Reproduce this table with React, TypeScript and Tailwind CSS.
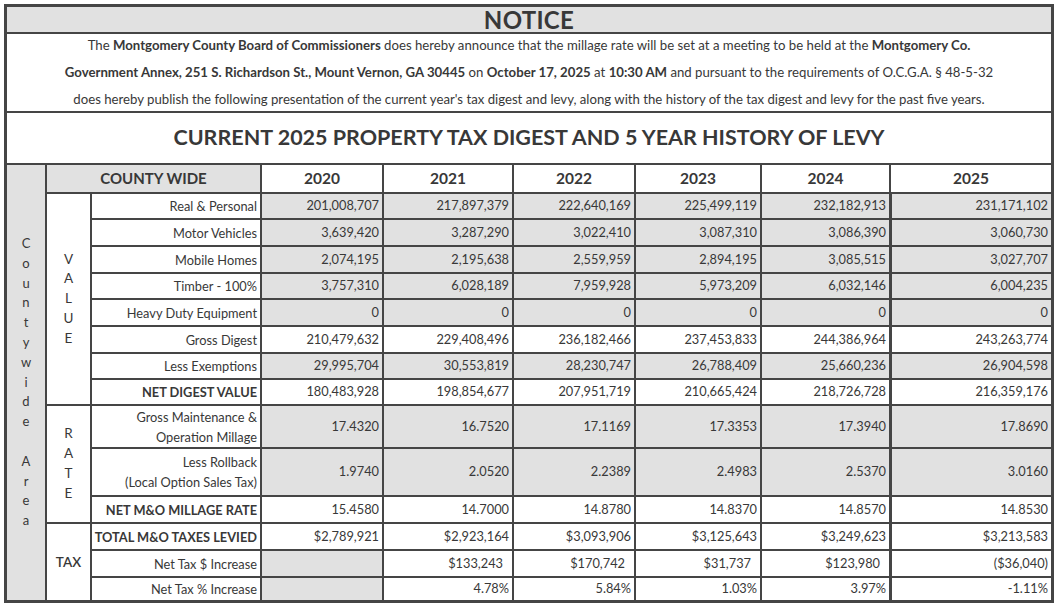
import React from "react"

type Row = {
  label: React.ReactNode
  values: string[]
  shade: boolean
  bold?: boolean
  first?: boolean // 2020 cell shaded even when the row isn't
  padRight?: boolean
}

const years = ["2020", "2021", "2022", "2023", "2024", "2025"]

const rows: Row[] = [
  { label: "Real & Personal", values: ["201,008,707", "217,897,379", "222,640,169", "225,499,119", "232,182,913", "231,171,102"], shade: true },
  { label: "Motor Vehicles", values: ["3,639,420", "3,287,290", "3,022,410", "3,087,310", "3,086,390", "3,060,730"], shade: true },
  { label: "Mobile Homes", values: ["2,074,195", "2,195,638", "2,559,959", "2,894,195", "3,085,515", "3,027,707"], shade: true },
  { label: "Timber - 100%", values: ["3,757,310", "6,028,189", "7,959,928", "5,973,209", "6,032,146", "6,004,235"], shade: true },
  { label: "Heavy Duty Equipment", values: ["0", "0", "0", "0", "0", "0"], shade: true },
  { label: "Gross Digest", values: ["210,479,632", "229,408,496", "236,182,466", "237,453,833", "244,386,964", "243,263,774"], shade: false },
  { label: "Less Exemptions", values: ["29,995,704", "30,553,819", "28,230,747", "26,788,409", "25,660,236", "26,904,598"], shade: true },
  { label: "NET DIGEST VALUE", values: ["180,483,928", "198,854,677", "207,951,719", "210,665,424", "218,726,728", "216,359,176"], shade: false, bold: true },
  {
    label: (
      <>
        Gross Maintenance &amp;
        <br />
        Operation Millage
      </>
    ),
    values: ["17.4320", "16.7520", "17.1169", "17.3353", "17.3940", "17.8690"],
    shade: true,
  },
  {
    label: (
      <>
        Less Rollback
        <br />
        (Local Option Sales Tax)
      </>
    ),
    values: ["1.9740", "2.0520", "2.2389", "2.4983", "2.5370", "3.0160"],
    shade: true,
  },
  { label: "NET M&O MILLAGE RATE", values: ["15.4580", "14.7000", "14.8780", "14.8370", "14.8570", "14.8530"], shade: false, bold: true },
  { label: "TOTAL M&O TAXES LEVIED", values: ["$2,789,921", "$2,923,164", "$3,093,906", "$3,125,643", "$3,249,623", "$3,213,583"], shade: false, bold: true },
  { label: "Net Tax $ Increase", values: ["", "$133,243", "$170,742", "$31,737", "$123,980", "($36,040)"], shade: false, first: true, padRight: true },
  { label: "Net Tax % Increase", values: ["", "4.78%", "5.84%", "1.03%", "3.97%", "-1.11%"], shade: false, first: true },
]

const countyLetters = ["C", "o", "u", "n", "t", "y", "w", "i", "d", "e", "\u00a0", "A", "r", "e", "a"]

function Stack({ letters }: { letters: string[] }) {
  return (
    <div className="flex flex-col items-center leading-[19.8px]">
      {letters.map((l, i) => (
        <span key={i}>{l}</span>
      ))}
    </div>
  )
}

export default function App() {
  return (
    <div className="bg-white w-[1057px] h-[604px] pt-[4px] pl-[4px] font-[Lato,sans-serif] text-[#383838] overflow-hidden">
      <div className="w-[1050px] border-[3px] border-[#454545]">
        {/* Notice heading */}
        <div className="h-[27px] bg-[#e1e1e1] border-b-2 border-[#454545] flex items-center justify-center">
          <span className="text-[24px] font-bold leading-none tracking-[0.3px]">NOTICE</span>
        </div>

        {/* Announcement */}
        <div className="h-[79px] border-b-2 border-[#454545] flex flex-col items-center justify-center text-[13.2px] leading-[27px] whitespace-nowrap">
          <div>
            The <b>Montgomery County Board of Commissioners</b> does hereby announce that the millage rate will be set at a meeting to be held at the <b>Montgomery Co.</b>
          </div>
          <div>
            <b>Government Annex, 251 S. Richardson St., Mount Vernon, GA 30445</b> on <b>October 17, 2025</b> at <b>10:30 AM</b> and pursuant to the requirements of O.C.G.A. § 48-5-32
          </div>
          <div>
            does hereby publish the following presentation of the current year's tax digest and levy, along with the history of the tax digest and levy for the past five years.
          </div>
        </div>

        {/* Title */}
        <div className="h-[52px] border-b-2 border-[#454545] flex items-center justify-center">
          <span className="text-[21.5px] font-bold leading-none">CURRENT 2025 PROPERTY TAX DIGEST AND 5 YEAR HISTORY OF LEVY</span>
        </div>

        {/* Digest table */}
        <div className="grid grid-cols-[38px_43px_168px_120px_128px_120px_124px_127px_160px] grid-rows-[27px_24px_25px_25px_24px_25px_25px_24px_24px_41px_46px_25px_25px_25px_22px] gap-[2px] bg-[#454545] text-[12.8px]">
          <div className="col-start-1 row-start-1 row-span-15 bg-[#e1e1e1] flex items-center justify-center text-[13px]">
            <Stack letters={countyLetters} />
          </div>
          <div className="col-start-2 row-start-2 row-span-8 bg-white flex items-center justify-center text-[13.5px]">
            <Stack letters={["V", "A", "L", "U", "E"]} />
          </div>
          <div className="col-start-2 row-start-10 row-span-3 bg-white flex items-center justify-center text-[13.5px]">
            <Stack letters={["R", "A", "T", "E"]} />
          </div>
          <div className="col-start-2 row-start-13 row-span-3 bg-white flex items-center justify-center text-[13.5px] font-semibold">
            TAX
          </div>

          <div className="col-start-2 row-start-1 col-span-2 bg-[#e1e1e1] flex items-center justify-center text-[15px] font-bold">
            COUNTY WIDE
          </div>
          {years.map((y) => (
            <div key={y} className="bg-white flex items-center justify-center text-[15.5px] font-bold">
              {y}
            </div>
          ))}

          {rows.map((r, ri) => (
            <React.Fragment key={ri}>
              <div className={`col-start-3 bg-white flex items-center justify-end text-right pr-[3px] leading-[20px] ${r.bold ? "font-bold" : ""}`}>
                {r.label}
              </div>
              {r.values.map((v, vi) => {
                const shaded = r.shade || (r.first && vi === 0)
                return (
                  <div
                    key={vi}
                    className={`flex items-center justify-end ${shaded ? "bg-[#e1e1e1]" : "bg-white"} ${vi === 5 ? "border-l border-[#454545]" : ""} ${r.padRight && vi < 5 ? "pr-[9px]" : "pr-[3px]"}`}
                  >
                    {v}
                  </div>
                )
              })}
            </React.Fragment>
          ))}
        </div>
      </div>
    </div>
  )
}
